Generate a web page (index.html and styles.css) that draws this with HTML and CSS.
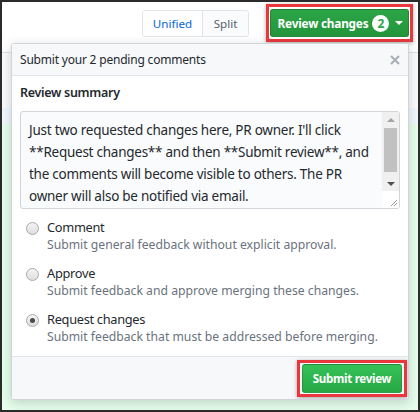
FILE: index.html
```html
<!DOCTYPE html>
<html>
<head>
<meta charset="utf-8">
<link rel="stylesheet" href="styles.css">
</head>
<body>
<div class="frame">
  <div class="toolbar">
    <div class="seg">
      <span class="seg-on">Unified</span>
      <span class="seg-off">Split</span>
    </div>
    <div class="hl hl-top">
      <div class="btn btn-review">
        <span>Review changes</span>
        <span class="badge">2</span>
        <span class="caret"></span>
      </div>
    </div>
  </div>
  <div class="file">
    <div class="fhead"></div>
    <div class="hunk"></div>
    <div class="adds"></div>
  </div>

  <div class="popup">
    <div class="phead">
      <span>Submit your 2 pending comments</span>
      <svg class="close" width="10" height="10" viewBox="0 0 10 10"><path d="M1 1L9 9M9 1L1 9" stroke="#a8aeb4" stroke-width="2" fill="none"/></svg>
    </div>
    <div class="pbody">
      <div class="label">Review summary</div>
      <div class="ta">
        <div class="ta-text">
          <div>Just two requested changes here, PR owner. I'll click</div>
          <div>**Request changes** and then **Submit review**, and</div>
          <div>the comments will become visible to others. The PR</div>
          <div>owner will also be notified via email.</div>
        </div>
        <div class="sb">
          <div class="sb-up"></div>
          <div class="sb-thumb"></div>
          <div class="sb-space"></div>
          <div class="sb-down"></div>
          <div class="sb-corner">
            <svg width="8" height="8" viewBox="0 0 8 8"><path d="M7 1L1 7M7 4L4 7" stroke="#9a9a9a" stroke-width="1" fill="none"/></svg>
          </div>
        </div>
      </div>
      <div class="opts">
        <div class="opt">
          <span class="radio"></span>
          <div class="opt-text">
            <div class="opt-title">Comment</div>
            <div class="opt-desc">Submit general feedback without explicit approval.</div>
          </div>
        </div>
        <div class="opt">
          <span class="radio"></span>
          <div class="opt-text">
            <div class="opt-title">Approve</div>
            <div class="opt-desc">Submit feedback and approve merging these changes.</div>
          </div>
        </div>
        <div class="opt">
          <span class="radio checked"></span>
          <div class="opt-text">
            <div class="opt-title">Request changes</div>
            <div class="opt-desc">Submit feedback that must be addressed before merging.</div>
          </div>
        </div>
      </div>
    </div>
    <div class="pfoot">
      <div class="hl hl-bottom">
        <div class="btn btn-submit">Submit review</div>
      </div>
    </div>
  </div>
</div>
</body>
</html>
```

FILE: styles.css
```css
* { box-sizing: border-box; margin: 0; padding: 0; }
html, body { width: 420px; height: 412px; overflow: hidden; background: #fff; }
body { font-family: "Noto Sans", "Open Sans", sans-serif; color: #24292e; }

.frame {
  position: relative;
  width: 420px;
  height: 412px;
  border: 2px solid #2b2b2b;
  display: flex;
  flex-direction: column;
  background: #fff;
  overflow: hidden;
}

.toolbar {
  height: 42px;
  flex: none;
  display: flex;
  align-items: center;
  justify-content: flex-end;
  gap: 17px;
  padding-right: 5px;
}

.seg {
  display: flex;
  height: 27px;
  border: 1px solid #e1e4e8;
  border-radius: 3px;
  overflow: hidden;
  font-size: 11.6px;
}
.seg span { display: flex; align-items: center; justify-content: center; }
.seg-on { width: 60px; color: #0366d6; background: #fff; border-right: 1px solid #e1e4e8; }
.seg-off { width: 45px; color: #586069; background: #fafbfc; }

.hl {
  border: 3px solid #e8383d;
  box-shadow: 0 1px 4px rgba(0, 0, 0, 0.35);
}
.hl-top { padding: 2px 1px; }
.hl-bottom { padding: 1px 2px; }

.btn {
  display: flex;
  align-items: center;
  justify-content: center;
  color: #fff;
  font-weight: 700;
  border-radius: 3px;
  border: 1px solid rgba(27, 31, 35, 0.2);
  white-space: nowrap;
}
.btn-review {
  width: 139px;
  height: 28px;
  font-size: 11.8px;
  letter-spacing: -0.2px;
  background: linear-gradient(#2ca546, #23953c);
  padding-left: 2px;
}
.btn-submit {
  width: 100px;
  height: 29px;
  font-size: 11.6px;
  letter-spacing: -0.3px;
  background: linear-gradient(#34c257, #28a745);
}

.badge {
  display: inline-flex;
  align-items: center;
  justify-content: center;
  width: 17px;
  height: 17px;
  border-radius: 50%;
  background: #fff;
  color: #28a745;
  font-size: 12px;
  font-weight: 700;
  margin-left: 4px;
  letter-spacing: 0;
}
.caret {
  width: 0;
  height: 0;
  border-left: 4px solid transparent;
  border-right: 4px solid transparent;
  border-top: 4px solid #fff;
  margin-left: 6px;
}

.file {
  flex: 1;
  display: flex;
  flex-direction: column;
  margin-top: 8px;
  border-top: 1px solid #dcdfe3;
}
.fhead { height: 55px; background: #fafbfc; flex: none; }
.hunk { height: 16px; background: #f1f8ff; flex: none; }
.adds { flex: 1; background: #e6ffed; }

.popup {
  position: absolute;
  left: 9px;
  top: 41px;
  width: 398px;
  height: 357px;
  background: #fff;
  border: 1px solid #d1d5da;
  border-radius: 3px;
  box-shadow: 0 3px 12px rgba(27, 31, 35, 0.2);
  display: flex;
  flex-direction: column;
  overflow: hidden;
}

.phead {
  height: 32px;
  flex: none;
  background: #f6f8fa;
  border-bottom: 1px solid #e1e4e8;
  display: flex;
  align-items: center;
  justify-content: space-between;
  padding: 0 8px;
  font-size: 12px;
  letter-spacing: -0.2px;
}

.pbody { padding: 8px 8px 0; flex: 1; }
.label { font-size: 12.5px; font-weight: 600; line-height: 18px; letter-spacing: -0.3px; }

.ta {
  margin-top: 9px;
  height: 98px;
  border: 1px solid #d1d5da;
  border-radius: 3px;
  background: #fafbfc;
  display: flex;
  overflow: hidden;
}
.ta-text {
  flex: 1;
  padding: 7px 8px;
  font-size: 13.5px;
  letter-spacing: -0.25px;
  line-height: 22px;
  white-space: nowrap;
  color: #24292e;
}
.sb {
  width: 17px;
  flex: none;
  display: flex;
  flex-direction: column;
  align-items: center;
  background: #f0f0f0;
}
.sb-up {
  margin-top: 6px;
  width: 0; height: 0;
  border-left: 4px solid transparent;
  border-right: 4px solid transparent;
  border-bottom: 4px solid #a3a3a3;
}
.sb-thumb { margin-top: 6px; width: 13px; height: 44px; background: #c1c1c1; }
.sb-space { flex: 1; }
.sb-down {
  width: 0; height: 0;
  border-left: 4px solid transparent;
  border-right: 4px solid transparent;
  border-top: 4px solid #505050;
  margin-bottom: 5px;
}
.sb-corner {
  width: 17px;
  height: 17px;
  background: #fff;
  display: flex;
  align-items: flex-end;
  justify-content: flex-end;
  padding: 0 1px 1px 0;
}

.opts { margin-top: 9px; padding-left: 6px; }
.opt { display: flex; gap: 8px; margin-bottom: 10px; }
.radio {
  flex: none;
  width: 13px;
  height: 13px;
  margin-top: 4px;
  border-radius: 50%;
  border: 1px solid #a9a9a9;
  background: linear-gradient(#f4f4f4, #dedede);
  display: flex;
  align-items: center;
  justify-content: center;
}
.radio.checked::after {
  content: "";
  width: 5px;
  height: 5px;
  border-radius: 50%;
  background: #4a4a4a;
}
.opt-title { font-size: 12.8px; line-height: 18px; letter-spacing: -0.3px; color: #24292e; }
.opt-desc { font-size: 12.2px; line-height: 18px; color: #6a737d; }

.pfoot {
  height: 44px;
  flex: none;
  background: #f6f8fa;
  border-top: 1px solid #e1e4e8;
  display: flex;
  align-items: center;
  justify-content: flex-end;
  padding-right: 1px;
}
```
